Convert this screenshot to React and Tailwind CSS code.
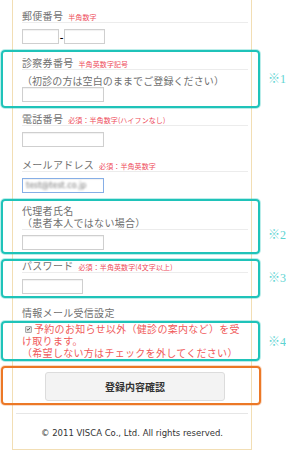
import React from "react";

const jp = { fontFamily: '"Noto Sans CJK JP", "Noto Sans", sans-serif' };

const Label = ({ children, note }) => (
  <div className="flex items-baseline h-[14px] leading-[14px] border-b border-[#ececec] text-[10px] text-[#707070] tracking-[0.3px]">
    <span>{children}</span>
    {note && (
      <span className="ml-[5px] text-[7px] leading-[14px] text-[#ee4b5a] tracking-[0.1px]">
        {note}
      </span>
    )}
  </div>
);

const Input = ({ w = "w-[82px]", blue, children }) => (
  <div
    className={`h-[15px] ${w} border ${
      blue ? "border-[#86aee6]" : "border-[#cfcfcf]"
    } bg-white shadow-[inset_0_1px_1px_rgba(0,0,0,0.06)] flex items-center px-[3px]`}
  >
    {children}
  </div>
);

const Note = ({ top, height, label, labelTop, orange }) => (
  <>
    <div
      className={`absolute left-[1px] rounded-[4px] pointer-events-none ${
        orange
          ? "border-2 border-[#ec7826] w-[260px] shadow-[0_0_0_1px_rgba(236,120,38,0.25)]"
          : "border-2 border-[#1fc3b9] w-[259px] shadow-[0_0_0_1px_rgba(31,195,185,0.3)]"
      }`}
      style={{ top, height }}
    />
    {label && (
      <span
        className="absolute left-[268px] text-[12px] leading-[14px] text-[#5ed4d2] whitespace-nowrap"
        style={{ top: labelTop, fontFamily: '"Liberation Serif", "Noto Sans CJK JP", serif' }}
      >
        {label}
      </span>
    )}
  </>
);

export default function App() {
  return (
    <div className="relative w-[286px] h-[450px] bg-white overflow-hidden" style={jp}>
      <div className="ml-[12px] w-[240px] border-x border-b border-[#f2deb4] pl-[9px] pr-[3px] pt-[9px]">
        {/* 郵便番号 */}
        <Label note="半角数字">郵便番号</Label>
        <div className="mt-[6px] flex items-center">
          <Input w="w-[37px]" />
          <span className="w-[5px] text-center text-[10px] leading-[10px] font-bold text-black">-</span>
          <Input w="w-[41px]" />
        </div>

        {/* 診察券番号 */}
        <div className="mt-[12px]">
          <Label note="半角英数字記号">診察券番号</Label>
          <div className="mt-[5px] text-[10px] leading-[12px] text-[#707070] tracking-[0.1px]">
            （初診の方は空白のままでご登録ください）
          </div>
          <Input w="w-[82px]" />
        </div>

        {/* 電話番号 */}
        <div className="mt-[10px]">
          <Label note="必須：半角数字(ハイフンなし)">電話番号</Label>
          <div className="mt-[6px]">
            <Input />
          </div>
        </div>

        {/* メールアドレス */}
        <div className="mt-[11px]">
          <Label note="必須：半角英数字">メールアドレス</Label>
          <div className="mt-[6px]">
            <Input blue>
              <span
                className="text-[8px] leading-[10px] text-[#777] blur-[1px]"
                style={{ fontFamily: '"DejaVu Sans", sans-serif' }}
              >
                test@test.co.jp
              </span>
            </Input>
          </div>
        </div>

        {/* 代理者氏名 */}
        <div className="mt-[11px]">
          <div className="border-b border-[#ececec] text-[10px] leading-[12px] text-[#707070] tracking-[0.3px] pt-[1px]">
            <div>代理者氏名</div>
            <div>（患者本人ではない場合）</div>
          </div>
          <div className="mt-[5px]">
            <Input />
          </div>
        </div>

        {/* パスワード */}
        <div className="mt-[9px]">
          <Label note="必須：半角英数字(4文字以上)">パスワード</Label>
          <div className="mt-[6px]">
            <Input w="w-[61px]" />
          </div>
        </div>

        {/* 情報メール受信設定 */}
        <div className="mt-[12px]">
          <div className="h-[14px] text-[10px] leading-[14px] text-[#707070] tracking-[0.3px]">
            情報メール受信設定
          </div>
          <div className="mt-[3px] text-[10px] leading-[12px] text-[#f05a5a] tracking-[0.3px]">
            <span className="inline-flex items-center justify-center w-[7px] h-[7px] ml-[3px] mr-[2px] bg-[#e4e4e4] border border-[#aaa] rounded-[1px] align-[1px]">
              <svg viewBox="0 0 8 8" className="w-[6px] h-[6px]">
                <path d="M1.2 4.2 L3.2 6 L6.8 1.8" fill="none" stroke="#444" strokeWidth="1.4" />
              </svg>
            </span>
            予約のお知らせ以外（健診の案内など）を受け取ります。
            <br />
            （希望しない方はチェックを外してください）
          </div>
        </div>

        {/* button */}
        <button className="mt-[13px] ml-[23px] w-[180px] h-[29px] rounded-[3px] border border-[#dcdcdc] bg-[#f3f3f3] text-[10px] font-bold text-[#333]">
          登録内容確認
        </button>

        {/* footer */}
        <div className="-ml-[6px] mt-[12px] border-t border-[#e6e6e6] pt-[13px] pb-[10px] text-center text-[8.5px] leading-[12px] text-[#333]"
          style={{ fontFamily: '"DejaVu Sans", sans-serif' }}>
          © 2011 VISCA Co., Ltd. All rights reserved.
        </div>
      </div>

      {/* annotation frames */}
      <Note top={50} height={58} label="※1" labelTop={72} />
      <Note top={199} height={55} label="※2" labelTop={228} />
      <Note top={259} height={39} label="※3" labelTop={271} />
      <Note top={321} height={40} label="※4" labelTop={335} />
      <Note top={366} height={39} orange />
    </div>
  );
}
